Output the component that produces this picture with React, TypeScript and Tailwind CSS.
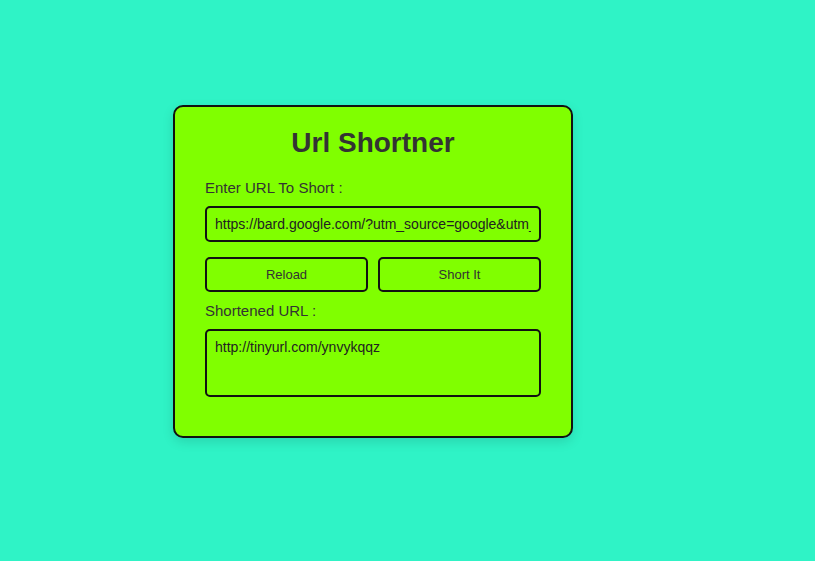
import { useState } from 'react'

export default function App() {
  const [url, setUrl] = useState('https://bard.google.com/?utm_source=google&utm_medium=cpc')
  const [short] = useState('http://tinyurl.com/ynvykqqz')

  return (
    <div className="min-h-[561px] w-full bg-[#2ff3c6] pt-[105px] pl-[173px] font-['Liberation_Sans',Arial,sans-serif] text-[#333]">
      <div className="w-[400px] rounded-[10px] border-2 border-[#111] bg-[#80ff00] px-[30px] pt-[20px] pb-[39px] shadow-[0_4px_12px_rgba(0,0,0,0.12)]">
        {/* Title */}
        <h1 className="text-center text-[28px] leading-[32px] font-bold text-[#333]">Url Shortner</h1>

        <label className="mt-[20px] block text-[15px] leading-[18px]">Enter URL To Short :</label>
        <input
          value={url}
          onChange={(e) => setUrl(e.target.value)}
          className="mt-[9px] block h-[36px] w-full rounded-[5px] border-2 border-[#111] bg-transparent px-[8px] text-[14px] text-[#222] outline-none"
        />

        {/* Actions */}
        <div className="mt-[15px] flex gap-[10px]">
          <button className="h-[35px] flex-1 rounded-[5px] border-2 border-[#111] bg-transparent text-[13px] text-[#333]">
            Reload
          </button>
          <button className="h-[35px] flex-1 rounded-[5px] border-2 border-[#111] bg-transparent text-[13px] text-[#333]">
            Short It
          </button>
        </div>

        <label className="mt-[10px] block text-[15px] leading-[18px]">Shortened URL :</label>
        <textarea
          readOnly
          value={short}
          className="mt-[9px] block h-[68px] w-full resize-none rounded-[5px] border-2 border-[#111] bg-transparent px-[8px] py-[8px] text-[14px] leading-[17px] text-[#222] outline-none"
        />
      </div>
    </div>
  )
}
